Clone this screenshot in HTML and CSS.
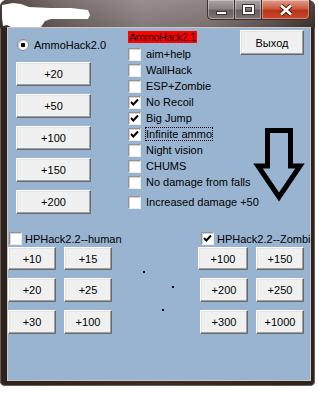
FILE: index.html
```html
<!DOCTYPE html>
<html lang="en">
<head>
  <meta charset="UTF-8" />
  <title>AmmoHack</title>
  <link rel="stylesheet" href="styles.css">
</head>
<body>
  <div class="window">
    <div class="titlebar">
      <svg class="scribble" width="90" height="26" viewBox="0 0 90 26">
        <path d="M1 3 L12 1 L20 2 L28 5 L50 6 L70 6 L87 8 L89 13 L87 17 L50 17 L44 19 L40 25 L22 26 L10 25 L6 23 L2 24 L1 16 Z" fill="#fff"/>
      </svg>
      <div class="caption-btns">
        <span class="cb cb-min"><i></i></span>
        <span class="cb cb-max"><i></i></span>
        <span class="cb cb-close">
          <svg width="14" height="12" viewBox="0 0 14 12">
            <path d="M2 1.5 L12 10.5 M12 1.5 L2 10.5" stroke="#4a1a10" stroke-width="4.5" />
            <path d="M2 1.5 L12 10.5 M12 1.5 L2 10.5" stroke="#fff" stroke-width="2.5" />
          </svg>
        </span>
      </div>
    </div>

    <div class="client">
      <div class="top">
        <div class="col-left">
          <label class="radio"><span class="radio-dot"></span>AmmoHack2.0</label>
          <div class="btn-stack">
            <button class="btn">+20</button>
            <button class="btn">+50</button>
            <button class="btn">+100</button>
            <button class="btn">+150</button>
            <button class="btn">+200</button>
          </div>
        </div>

        <div class="col-mid">
          <div class="tag">AmmoHack2.1</div>
          <div class="checks">
            <div class="check"><span class="box"></span>aim+help</div>
            <div class="check"><span class="box"></span>WallHack</div>
            <div class="check"><span class="box"></span>ESP+Zombie</div>
            <div class="check"><span class="box on"><svg width="11" height="11" viewBox="0 0 11 11"><polyline points="2,5 4.3,7.5 9,2.5" /></svg></span>No Recoil</div>
            <div class="check"><span class="box on"><svg width="11" height="11" viewBox="0 0 11 11"><polyline points="2,5 4.3,7.5 9,2.5" /></svg></span>Big Jump</div>
            <div class="check"><span class="box on"><svg width="11" height="11" viewBox="0 0 11 11"><polyline points="2,5 4.3,7.5 9,2.5" /></svg></span><span class="focus">Infinite ammo</span></div>
            <div class="check"><span class="box"></span>Night vision</div>
            <div class="check"><span class="box"></span>CHUMS</div>
            <div class="check"><span class="box"></span>No damage from falls</div>
            <div class="check last"><span class="box"></span>Increased damage +50</div>
          </div>
        </div>

        <div class="col-right">
          <button class="btn exit">Выход</button>
          <svg class="arrow" width="54" height="78" viewBox="0 0 54 78">
            <polygon points="15.5,4.5 38.5,4.5 38.5,40 48,40 27,71 6,40 15.5,40" />
          </svg>
        </div>
      </div>

      <div class="bottom">
        <div class="group">
          <div class="check hp"><span class="box"></span>HPHack2.2--human</div>
          <div class="btn-grid">
            <button class="btn">+10</button>
            <button class="btn">+15</button>
            <button class="btn">+20</button>
            <button class="btn">+25</button>
            <button class="btn">+30</button>
            <button class="btn">+100</button>
          </div>
        </div>

        <div class="group group-right">
          <div class="check hp"><span class="box on"><svg width="11" height="11" viewBox="0 0 11 11"><polyline points="2,5 4.3,7.5 9,2.5" /></svg></span>HPHack2.2--Zombi</div>
          <div class="btn-grid">
            <button class="btn shift">+100</button>
            <button class="btn">+150</button>
            <button class="btn">+200</button>
            <button class="btn">+250</button>
            <button class="btn">+300</button>
            <button class="btn">+1000</button>
          </div>
        </div>

        <span class="dot" style="left:135px; top:39px"></span>
        <span class="dot" style="left:164px; top:54px"></span>
        <span class="dot" style="left:154px; top:77px"></span>
      </div>
    </div>
  </div>
</body>
</html>
```

FILE: styles.css
```css
* { box-sizing: border-box; }

body {
  margin: 0;
  background: #ffffff;
  font-family: "Liberation Sans", Arial, sans-serif;
  font-size: 11px;
  color: #000000;
}

.window {
  width: 315px;
  height: 386px;
  display: flex;
  flex-direction: column;
  background: linear-gradient(90deg, #2e221d, #3b2d26 50%, #2e221d);
  border-radius: 7px 7px 5px 5px;
  box-shadow: inset 0 0 0 1px #6b5f5a;
  overflow: hidden;
}

/* title bar */
.titlebar {
  height: 28px;
  flex-shrink: 0;
  display: flex;
  align-items: flex-start;
  background:
    linear-gradient(180deg, rgba(255,255,255,0.10), rgba(0,0,0,0.08)),
    linear-gradient(90deg, #3b2e29 0%, #6a5d5c 18%, #8d8283 45%, #847979 65%, #5c4f4d 88%, #3e312c 100%);
}

.scribble {
  flex-shrink: 0;
  margin: 2px 0 0 1px;
}

.caption-btns {
  display: flex;
  margin-left: auto;
  margin-right: 5px;
}

.cb {
  height: 20px;
  display: flex;
  align-items: center;
  justify-content: center;
  border: 1px solid #3a2f2c;
  border-top: none;
  box-shadow: inset 0 0 0 1px rgba(255,255,255,0.35);
  background: linear-gradient(180deg, #aaa1a1 0%, #8c8383 45%, #6a5f5f 55%, #7d7373 100%);
}

.cb-min {
  width: 28px;
  border-radius: 0 0 0 5px;
}

.cb-max {
  width: 27px;
  border-left: none;
}

.cb-close {
  width: 48px;
  border-left: none;
  border-radius: 0 0 5px 0;
  background: linear-gradient(180deg, #e0a08e 0%, #cc5a3d 45%, #b8341a 55%, #c9492b 100%);
}

.cb-min i {
  width: 11px;
  height: 4px;
  margin-top: 6px;
  background: #ffffff;
  border: 1px solid #3e3434;
}

.cb-max i {
  width: 11px;
  height: 9px;
  border: 2px solid #ffffff;
  outline: 1px solid #3e3434;
  box-shadow: inset 0 0 0 1px #3e3434;
}

/* client area */
.client {
  flex: 1;
  margin: 0 5px 6px 8px;
  background: #99b4d1;
  box-shadow: 0 0 0 1px #cfc6c3;
}

.top {
  display: flex;
  align-items: flex-start;
}

.col-left {
  width: 75px;
  margin-left: 8px;
}

.radio {
  display: flex;
  align-items: center;
  gap: 5px;
  height: 12px;
  margin-top: 11px;
  margin-left: 1px;
  white-space: nowrap;
}

.radio-dot {
  flex-shrink: 0;
  width: 12px;
  height: 12px;
  border-radius: 50%;
  background: radial-gradient(circle, #000 0 2px, #fff 2.6px);
  border: 1px solid #8d8d8d;
  box-shadow: inset 1px 1px 0 #d0d0d0;
}

.btn {
  display: flex;
  align-items: center;
  justify-content: center;
  padding: 0;
  font: inherit;
  color: #000000;
  background: #f0f0f0;
  border: 1px solid;
  border-color: #ffffff #696969 #696969 #ffffff;
  box-shadow: inset -1px -1px 0 #a0a0a0, inset 1px 1px 0 #e3e3e3;
}

.btn-stack {
  display: flex;
  flex-direction: column;
  gap: 8px;
  margin-top: 11px;
}

.btn-stack .btn {
  height: 24px;
}

.col-mid {
  width: 112px;
  margin-left: 37px;
}

.tag {
  display: inline-block;
  min-width: 68px;
  height: 12px;
  margin-top: 3px;
  line-height: 12px;
  padding: 0 1px;
  background: #ff0000;
  color: #1a0000;
  white-space: nowrap;
  letter-spacing: -0.5px;
}

.checks {
  margin-top: 3px;
}

.check {
  display: flex;
  align-items: center;
  gap: 5px;
  height: 16px;
  white-space: nowrap;
}

.check.last {
  margin-top: 4px;
}

.box {
  width: 13px;
  height: 13px;
  flex-shrink: 0;
  background: #ffffff;
  border: 1px solid;
  border-color: #929292 #ececec #ececec #929292;
  box-shadow: inset 1px 1px 0 #d4d4d4;
}

.box svg {
  display: block;
}

.box polyline {
  fill: none;
  stroke: #000000;
  stroke-width: 2;
}

.focus {
  line-height: 12px;
  outline: 1px dotted #000000;
}

.col-right {
  width: 64px;
}

.exit {
  width: 64px;
  height: 25px;
  margin-top: 2px;
}

.arrow {
  display: block;
  margin: 71px 0 0 12px;
}

.arrow polygon {
  fill: none;
  stroke: #000000;
  stroke-width: 5;
  stroke-linejoin: miter;
  stroke-miterlimit: 10;
}

/* bottom part */
.bottom {
  position: relative;
  display: flex;
  justify-content: space-between;
  margin-top: 18px;
  padding-right: 6px;
}

.group {
  width: 104px;
}

.check.hp {
  height: 13px;
  gap: 3px;
  margin-left: 1px;
}

.btn-grid {
  display: grid;
  grid-template-columns: 48px 48px;
  grid-template-rows: 23px 24px 24px;
  gap: 8px;
  margin-top: 2px;
}

.btn.shift {
  margin-left: -2px;
}

.dot {
  position: absolute;
  width: 2px;
  height: 2px;
  background: #000000;
}
```
